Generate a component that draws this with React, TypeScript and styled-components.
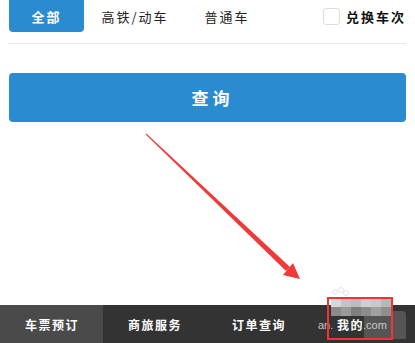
import React, { useState } from "react";
import styled, { createGlobalStyle } from "styled-components";

const GlobalStyle = createGlobalStyle`
  html, body {
    margin: 0;
    padding: 0;
    background: #fff;
  }
  body {
    font-family: "Noto Sans CJK SC", "Liberation Sans", sans-serif;
  }
`;

const Page = styled.div`
  position: relative;
  width: 415px;
  height: 343px;
  display: flex;
  flex-direction: column;
  overflow: hidden;
`;

const FilterRow = styled.div`
  display: flex;
  align-items: center;
  height: 32px;
  padding: 0 9px;
`;

const FilterTab = styled.div<{ $active?: boolean; $width: number }>`
  width: ${({ $width }) => $width}px;
  height: 32px;
  display: flex;
  align-items: center;
  justify-content: center;
  border-radius: 0 0 4px 4px;
  background: ${({ $active }) => ($active ? "#2a8bd0" : "transparent")};
  color: ${({ $active }) => ($active ? "#fff" : "#222")};
  font-size: 13px;
  font-weight: ${({ $active }) => ($active ? 700 : 400)};
  letter-spacing: 2px;
`;

const Exchange = styled.label`
  margin-left: auto;
  display: flex;
  align-items: center;
  gap: 6px;
  font-size: 13px;
  font-weight: 700;
  color: #111;
  letter-spacing: 2px;
`;

const CheckBox = styled.span`
  width: 15px;
  height: 15px;
  border: 1px solid #ddd;
  border-radius: 3px;
  background: #fff;
`;

const Divider = styled.div`
  margin: 11px 9px 0;
  height: 1px;
  background: #e8e8e8;
`;

const QueryButton = styled.button`
  margin: 29px 9px 0;
  height: 49px;
  border: none;
  border-radius: 4px;
  background: #2a8bd0;
  color: #fff;
  font-family: "Noto Sans CJK SC", sans-serif;
  font-size: 17px;
  font-weight: 700;
  letter-spacing: 4px;
  padding: 0 0 0 10px;
`;

const TabBar = styled.div`
  margin-top: auto;
  height: 38px;
  display: grid;
  grid-template-columns: 103px 104px 105px 103px;
  background: #333;
`;

const TabItem = styled.div<{ $active?: boolean }>`
  display: flex;
  align-items: center;
  padding-left: 25px;
  background: ${({ $active }) => ($active ? "#4a4a4a" : "transparent")};
  color: #fff;
  font-size: 12px;
  font-weight: 700;
  letter-spacing: 1.5px;
`;

const TabLabel = styled.span`
  position: relative;
  z-index: 2;
`;

const Overlay = styled.svg`
  position: absolute;
  left: 0;
  top: 0;
  z-index: 1;
  pointer-events: none;
`;

const Mark = styled.div<{ $left: number }>`
  position: absolute;
  left: ${({ $left }) => $left}px;
  top: 319px;
  z-index: 1;
  font-family: "Liberation Sans", sans-serif;
  font-size: 11px;
  color: rgba(225, 225, 225, 0.85);
`;

const HighlightBox = styled.div`
  position: absolute;
  left: 327px;
  top: 297px;
  width: 62px;
  height: 39px;
  border: 2px solid #f03434;
  z-index: 3;
  pointer-events: none;
`;

const filters = [
  { label: "全部", width: 75 },
  { label: "高铁/动车", width: 102 },
  { label: "普通车", width: 82 },
];

const tabs = ["车票预订", "商旅服务", "订单查询", "我的"];

const mosaic = [
  "#d8d8d8", "#c4c4c4", "#bdbdbd", "#cfcfcf", "#c8c8c8", "#b8b8b8",
  "#8a8a8a", "#9a9a9a", "#7e7e7e", "#8c8c8c", "#a0a0a0", "#8f8f8f",
];

export default function App() {
  const [active, setActive] = useState(0);
  return (
    <>
      <GlobalStyle />
      <Page>
        <FilterRow>
          {filters.map((f, i) => (
            <FilterTab key={f.label} $width={f.width} $active={i === active} onClick={() => setActive(i)}>
              {f.label}
            </FilterTab>
          ))}
          <Exchange>
            <CheckBox />
            兑换车次
          </Exchange>
        </FilterRow>
        <Divider />
        <QueryButton>查询</QueryButton>
        <TabBar>
          {tabs.map((t, i) => (
            <TabItem key={t} $active={i === 0}>
              <TabLabel>{t}</TabLabel>
            </TabItem>
          ))}
        </TabBar>

        <Overlay width="415" height="343" viewBox="0 0 415 343">
          {/* watermark mosaic */}
          <path d="M364 311 h38 q4 0 4 4 v24 h-42 z" fill="#555" />
          {mosaic.map((c, i) => (
            <rect key={i} x={331 + (i % 6) * 10} y={298 + Math.floor(i / 6) * 9} width="10" height="9" fill={c} />
          ))}
          <circle cx="335" cy="292" r="2.5" fill="none" stroke="#e4e4e4" />
          <circle cx="341" cy="290" r="2.5" fill="none" stroke="#e4e4e4" />
          <circle cx="346" cy="293" r="2.5" fill="none" stroke="#e4e4e4" />
          {/* arrow: tapered shaft + head */}
          <polygon points="145.7,134.4 146.3,133.6 290,267 286,271" fill="#f03a3a" />
          <polygon points="300,279 283,275 293,263" fill="#f03a3a" />
        </Overlay>
        <Mark $left={318}>an.</Mark>
        <Mark $left={363}>.com</Mark>
        <HighlightBox />
      </Page>
    </>
  );
}
